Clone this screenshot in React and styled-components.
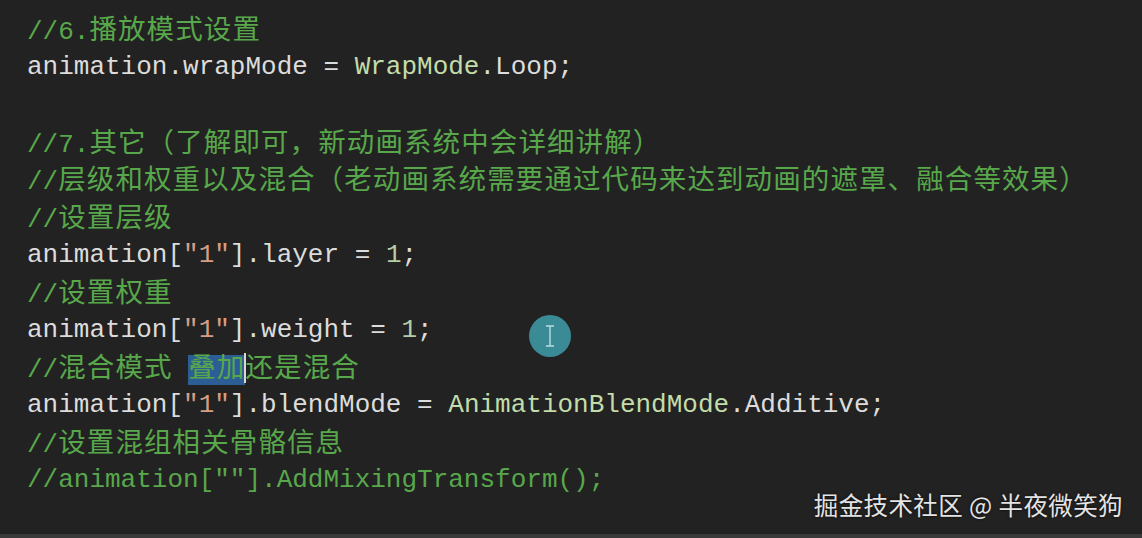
import React from "react";
import styled, { createGlobalStyle } from "styled-components";

const Global = createGlobalStyle`
  html, body { margin: 0; padding: 0; background: #222222; }
  body { width: 1142px; height: 538px; overflow: hidden; }
`;

const Screen = styled.div`
  position: relative;
  width: 1142px;
  height: 538px;
  display: flex;
  flex-direction: column;
  background: #222222;
`;

const Editor = styled.div`
  flex: 1;
  padding: 9px 0 0 27px;
  font-family: "Liberation Mono", "Noto Sans CJK SC", monospace;
  font-size: 26px;
  color: #dcdcdc;
`;

const Line = styled.div`
  box-sizing: border-box;
  height: 37.5px;
  line-height: 37.5px;
  padding-top: ${(p) => (p.$code ? "2.5px" : "0")};
  white-space: pre;
`;

const Comment = styled.span`
  color: #58a84b;
`;

const Han = styled.span`
  font-family: "Noto Sans CJK SC", sans-serif;
  font-size: 27.5px;
  letter-spacing: 1.1px;
`;

const Str = styled.span`
  color: #d69d85;
`;

const Num = styled.span`
  color: #b5cea8;
`;

const Type = styled.span`
  color: #c2dcaa;
`;

const Selected = styled.span`
  background: #2c5d94;
`;

const Caret = styled.span`
  display: inline-block;
  width: 2px;
  height: 30px;
  margin-left: -1px;
  margin-right: -1px;
  vertical-align: -6px;
  background: #d8d8d8;
`;

const StatusStrip = styled.div`
  height: 4px;
  background: #3a3a3a;
`;

const Pointer = styled.div`
  position: absolute;
  left: 529px;
  top: 315px;
  width: 42px;
  height: 42px;
  border-radius: 50%;
  background: #3a8b96;
  display: flex;
  align-items: center;
  justify-content: center;
`;

const Watermark = styled.div`
  position: absolute;
  right: 19px;
  top: 488px;
  font-family: "Noto Sans CJK SC", sans-serif;
  font-size: 24.5px;
  line-height: 34px;
  color: #e4e4e4;
  text-shadow: 0 0 3px rgba(0, 0, 0, 0.8);
  letter-spacing: 0.4px;
`;

const IBeam = () => (
  <svg width="14" height="24" viewBox="0 0 14 24" fill="none" stroke="#b9dde0" strokeWidth="1.4">
    <path d="M3 2h8M3 22h8M7 2v20" />
  </svg>
);

const C = ({ pre, han, post }) => (
  <Comment>
    {pre}
    {han && <Han>{han}</Han>}
    {post}
  </Comment>
);

export default function App() {
  return (
    <>
      <Global />
      <Screen>
        <Editor>
          <Line>
            <C pre="//6." han="播放模式设置" />
          </Line>
          <Line $code>
            animation.wrapMode = <Type>WrapMode</Type>.Loop;
          </Line>
          <Line> </Line>
          <Line>
            <C pre="//7." han="其它（了解即可，新动画系统中会详细讲解）" />
          </Line>
          <Line>
            <C pre="//" han="层级和权重以及混合（老动画系统需要通过代码来达到动画的遮罩、融合等效果）" />
          </Line>
          <Line>
            <C pre="//" han="设置层级" />
          </Line>
          <Line $code>
            animation[<Str>"1"</Str>].layer = <Num>1</Num>;
          </Line>
          <Line>
            <C pre="//" han="设置权重" />
          </Line>
          <Line $code>
            animation[<Str>"1"</Str>].weight = <Num>1</Num>;
          </Line>
          <Line>
            <Comment>
              //<Han>混合模式</Han> <Selected><Han>叠加</Han></Selected>
              <Caret />
              <Han>还是混合</Han>
            </Comment>
          </Line>
          <Line $code>
            animation[<Str>"1"</Str>].blendMode = <Type>AnimationBlendMode</Type>.Additive;
          </Line>
          <Line>
            <C pre="//" han="设置混组相关骨骼信息" />
          </Line>
          <Line $code>
            <C pre={'//animation[""].AddMixingTransform();'} />
          </Line>
        </Editor>
        <StatusStrip />
        <Pointer>
          <IBeam />
        </Pointer>
        <Watermark>掘金技术社区 @ 半夜微笑狗</Watermark>
      </Screen>
    </>
  );
}
